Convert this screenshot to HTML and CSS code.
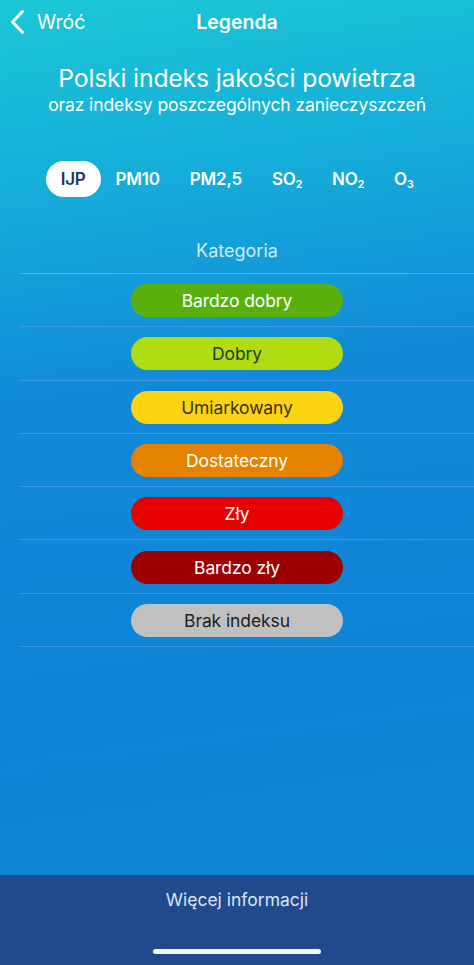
FILE: index.html
```html
<!DOCTYPE html>
<html lang="pl">
<head>
<meta charset="utf-8">
<title>Legenda</title>
<link rel="stylesheet" href="styles.css">
</head>
<body>
<div class="screen">
  <header class="nav">
    <a class="back">
      <svg class="chev" width="15" height="26" viewBox="0 0 15 26"><path d="M12.5 2.5 L2.5 13 L12.5 23.5" fill="none" stroke="#fff" stroke-width="3" stroke-linecap="round" stroke-linejoin="round"/></svg>
      <span>Wróć</span>
    </a>
    <h1 class="nav-title">Legenda</h1>
  </header>

  <section class="heading">
    <h2 class="title">Polski indeks jakości powietrza</h2>
    <p class="subtitle">oraz indeksy poszczególnych zanieczyszczeń</p>
  </section>

  <nav class="tabs">
    <span class="tab active">IJP</span>
    <span class="tab">PM10</span>
    <span class="tab">PM2,5</span>
    <span class="tab">SO<sub>2</sub></span>
    <span class="tab">NO<sub>2</sub></span>
    <span class="tab">O<sub>3</sub></span>
  </nav>

  <div class="col-head">Kategoria</div>

  <ul class="list">
    <li class="row"><span class="pill very-good">Bardzo dobry</span></li>
    <li class="row"><span class="pill good">Dobry</span></li>
    <li class="row"><span class="pill moderate">Umiarkowany</span></li>
    <li class="row"><span class="pill sufficient">Dostateczny</span></li>
    <li class="row"><span class="pill bad">Zły</span></li>
    <li class="row"><span class="pill very-bad">Bardzo zły</span></li>
    <li class="row"><span class="pill none">Brak indeksu</span></li>
  </ul>

  <div class="spacer"></div>

  <footer class="footer">
    <span class="more">Więcej informacji</span>
    <span class="home-indicator"></span>
  </footer>
</div>
</body>
</html>
```

FILE: styles.css
```css
* { box-sizing: border-box; }
html, body { margin: 0; padding: 0; }
body {
  font-family: "Inter", "Roboto", "Liberation Sans", sans-serif;
  color: #fff;
}
.screen {
  width: 474px;
  height: 965px;
  display: flex;
  flex-direction: column;
  background: linear-gradient(172deg, #1bc7d6 0%, #15abda 20%, #1189d8 40%, #0e84d6 70%, #0c89d5 100%);
  overflow: hidden;
}
.nav {
  height: 44px;
  display: flex;
  align-items: center;
  justify-content: center;
  position: relative;
}
.back {
  position: absolute;
  left: 10px;
  top: 9px;
  display: flex;
  align-items: center;
  gap: 12px;
  font-size: 19.5px;
  color: #fff;
}
.chev { display: block; }
.nav-title {
  margin: 0;
  font-size: 19.5px;
  font-weight: 600;
}
.heading {
  text-align: center;
  padding-top: 18px;
}
.title {
  margin: 0;
  font-size: 24.7px;
  font-weight: 400;
  line-height: 32px;
  letter-spacing: -0.15px;
}
.subtitle {
  margin: 0;
  font-size: 17.5px;
  line-height: 22px;
  letter-spacing: -0.1px;
}
.tabs {
  display: flex;
  justify-content: center;
  align-items: center;
  margin-top: 45px;
  margin-left: 0;
  height: 36px;
}
.tab {
  font-size: 17px;
  font-weight: 600;
  padding: 0 15px;
  height: 36px;
  line-height: 36px;
  border-radius: 18px;
  letter-spacing: -0.2px;
}
.tab sub {
  font-size: 10.5px;
  vertical-align: baseline;
  position: relative;
  top: 3px;
}
.tab.active {
  background: #fff;
  color: #1b3566;
}
.col-head {
  text-align: center;
  font-size: 18px;
  color: #c9eef8;
  margin-top: 42px;
  line-height: 24px;
}
.list {
  list-style: none;
  margin: 10px 0 0 0;
  padding: 0;
  position: relative;
}
.list::before {
  content: "";
  display: block;
  height: 1px;
  margin-left: 20px;
  background: rgba(120, 200, 240, 0.55);
}
.row {
  height: 53.3px;
  display: flex;
  align-items: center;
  justify-content: center;
  position: relative;
}
.row::after {
  content: "";
  position: absolute;
  left: 20px;
  right: 0;
  bottom: 0;
  height: 1px;
  background: rgba(90, 170, 235, 0.55);
}
.pill {
  width: 212px;
  height: 33px;
  border-radius: 17px;
  display: flex;
  align-items: center;
  justify-content: center;
  font-size: 17.5px;
  letter-spacing: -0.1px;
}
.very-good { background: #59b00b; color: #fff; }
.good { background: #b1dc12; color: #2b3a12; }
.moderate { background: #fcd40f; color: #3b2f0a; }
.sufficient { background: #e58200; color: #fff; }
.bad { background: #e60000; color: #fff; }
.very-bad { background: #9c0000; color: #fff; }
.none { background: #c0c0c0; color: #1e1e1e; }
.spacer { flex: 1; }
.footer {
  height: 90px;
  background: #21498e;
  display: flex;
  flex-direction: column;
  align-items: center;
}
.more {
  margin-top: 14px;
  font-size: 17.5px;
  color: #dce4f2;
  line-height: 22px;
}
.home-indicator {
  margin-top: 38px;
  width: 168px;
  height: 5px;
  border-radius: 3px;
  background: #f2f4f8;
}
```
